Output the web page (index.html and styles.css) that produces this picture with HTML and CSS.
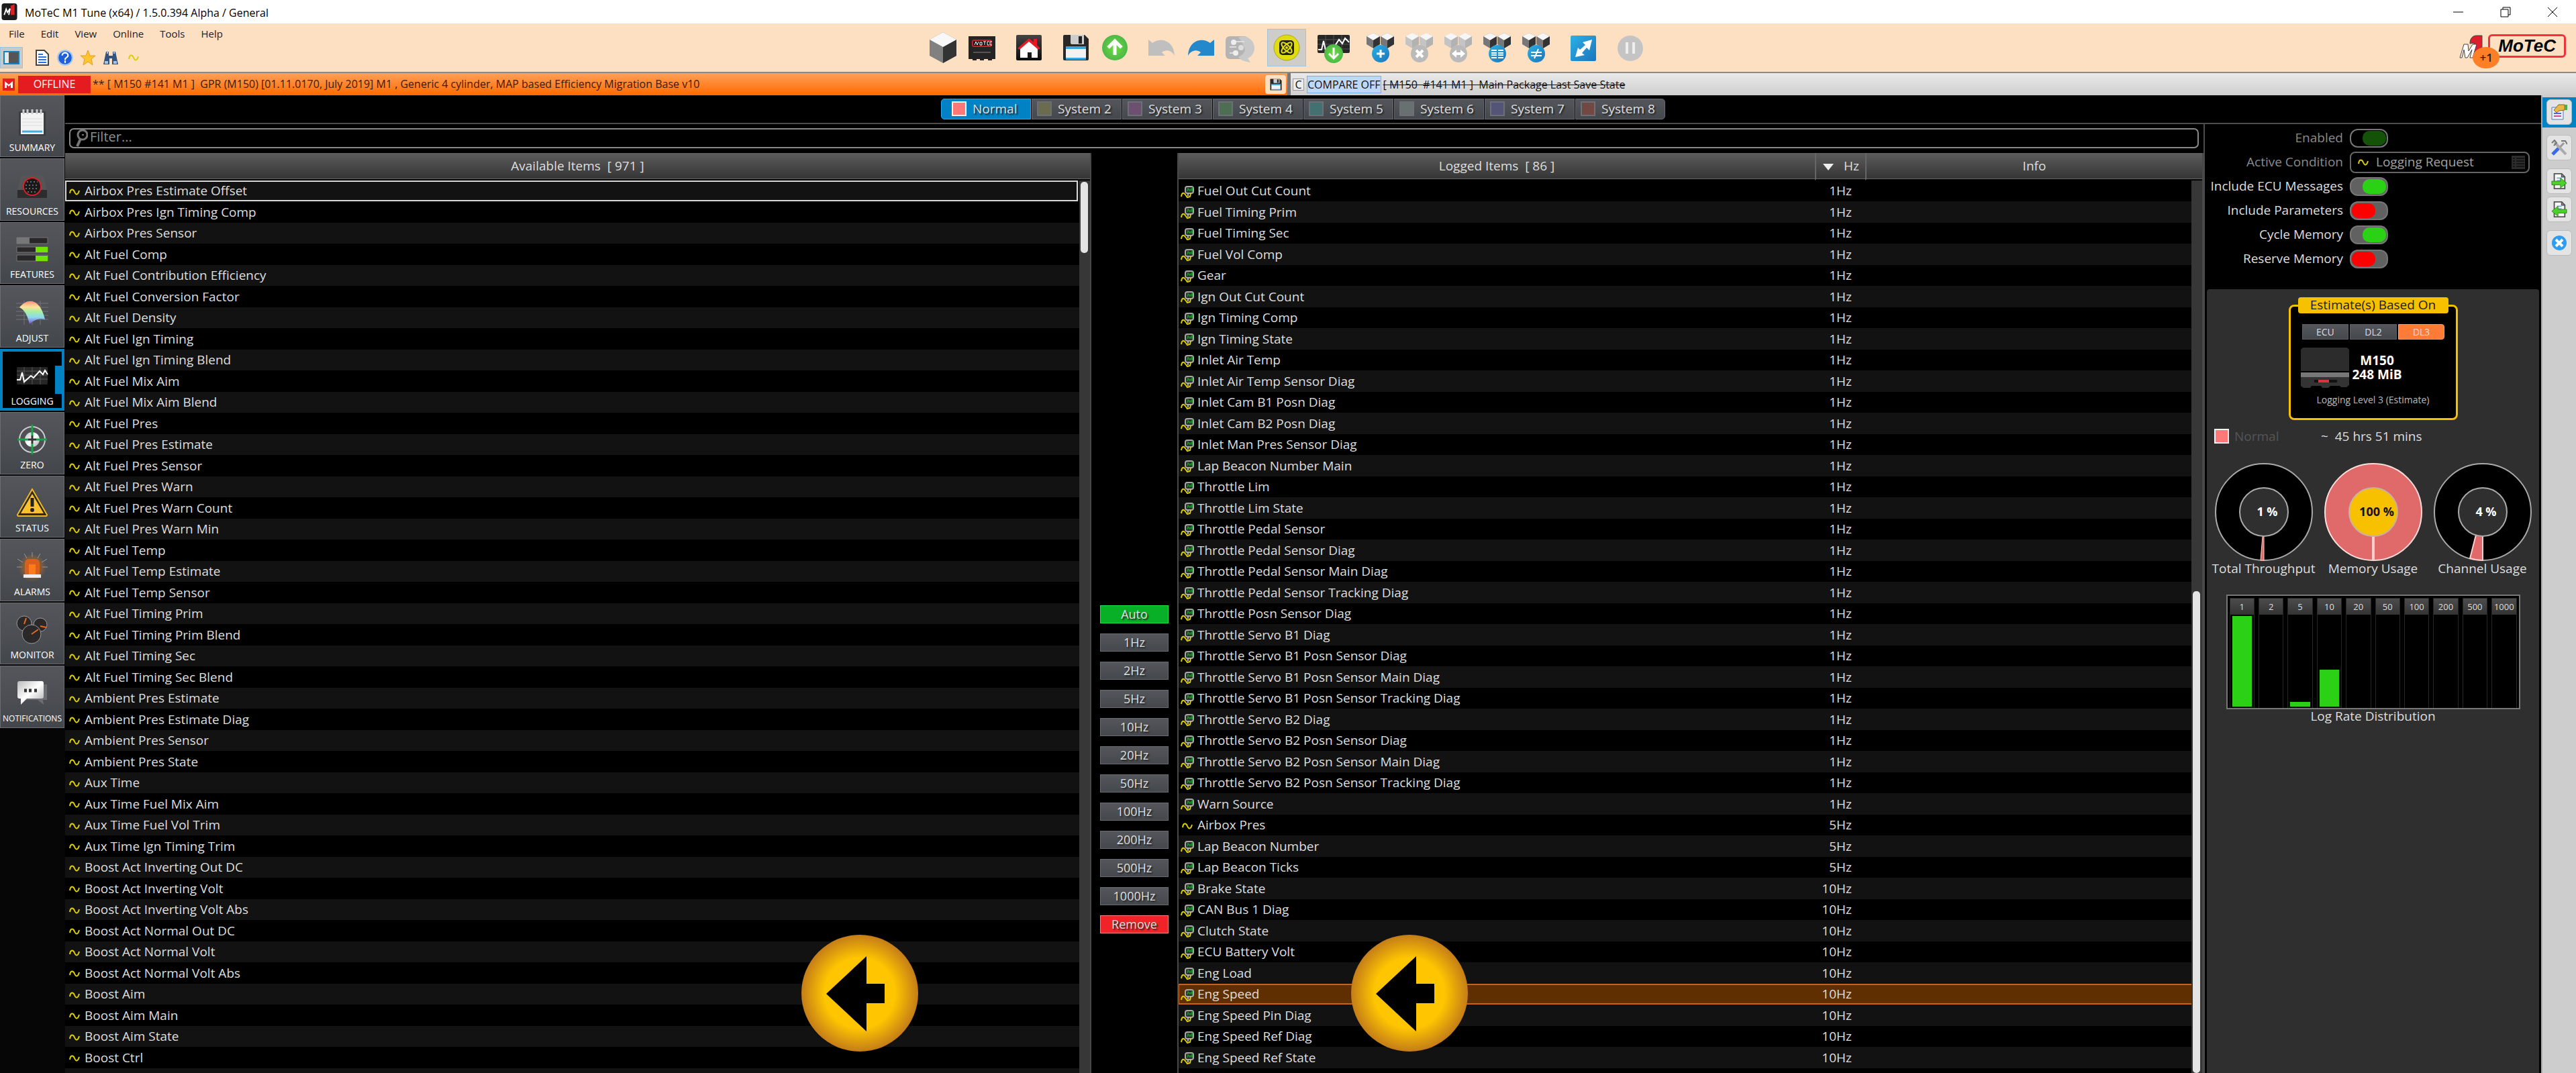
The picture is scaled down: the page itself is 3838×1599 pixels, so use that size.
FILE: index.html
```html
<!DOCTYPE html>
<html lang="en">
<head>
<meta charset="utf-8">
<title>MoTeC M1 Tune</title>
<link rel="stylesheet" href="styles.css">
</head>
<body>
<svg class="defs" aria-hidden="true">
  <defs>
    <linearGradient id="g-blue" x1="0" y1="0" x2="1" y2="1"><stop offset="0" stop-color="#2bb0e6"/><stop offset="1" stop-color="#1b75bb"/></linearGradient>
    <linearGradient id="g-dark" x1="0" y1="0" x2="0" y2="1"><stop offset="0" stop-color="#444"/><stop offset="1" stop-color="#0c0c0c"/></linearGradient>
    <linearGradient id="g-white" x1="0" y1="0" x2="1" y2="1"><stop offset="0" stop-color="#bbb"/><stop offset=".5" stop-color="#fff"/><stop offset="1" stop-color="#aaa"/></linearGradient>
    <linearGradient id="g-map" x1="0" y1="0" x2="0" y2="1"><stop offset="0" stop-color="#ff8f7c"/><stop offset=".25" stop-color="#ffe29a"/><stop offset=".45" stop-color="#a8f0a0"/><stop offset=".7" stop-color="#8fd8f0"/><stop offset="1" stop-color="#7a4fd0"/></linearGradient>
    <radialGradient id="g-green"><stop offset="0" stop-color="#6fdc3f"/><stop offset="1" stop-color="#4db848"/></radialGradient>
    <radialGradient id="g-glow"><stop offset="0" stop-color="#ff7a00" stop-opacity=".8"/><stop offset="1" stop-color="#ff7a00" stop-opacity="0"/></radialGradient>
    <radialGradient id="g-gold" r=".5"><stop offset=".6" stop-color="#ffc600"/><stop offset="1" stop-color="#c47d18"/></radialGradient>
  </defs>
  <symbol id="wave" viewBox="0 0 16 12"><path d="M1 8C2 1 6 1 8 6S13 11 15 4" fill="none" stroke="#dccf00" stroke-width="2"/></symbol>
  <symbol id="logwave" viewBox="0 0 20 20"><rect x="7" y="2" width="12" height="10" rx="3" fill="#2a2a2a" stroke="#a8a8a8" stroke-width="2"/><path d="M10 9l1-4 3 3 3-3v4" fill="none" stroke="#128c20" stroke-width="2"/><path d="M1 17c1-7 4-6 6-3l3 4 4-1 1-5" fill="none" stroke="#dccf00" stroke-width="2"/><path d="M11 12v4" stroke="#b5b5b5" stroke-width="2"/></symbol>
  <symbol id="cubes" viewBox="0 0 44 46"><path d="M1 6l10-5 10 5v12l-10 6-10-6z" fill="#777"/><path d="M11 11l10-5v12l-10 6z" fill="#333"/><path d="M1 6l10-5 10 5-10 6z" fill="#f6f6f6"/><path d="M22 6l10-5 10 5v12l-10 6-10-6z" fill="#777"/><path d="M32 11l10-5v12l-10 6z" fill="#333"/><path d="M22 6l10-5 10 5-10 6z" fill="#f6f6f6"/></symbol>
  <symbol id="cubes-off" viewBox="0 0 44 46"><path d="M1 6l10-5 10 5v12l-10 6-10-6z" fill="#c4c4c4"/><path d="M11 11l10-5v12l-10 6z" fill="#b2b2b2"/><path d="M1 6l10-5 10 5-10 6z" fill="#f6f6f6"/><path d="M22 6l10-5 10 5v12l-10 6-10-6z" fill="#c4c4c4"/><path d="M32 11l10-5v12l-10 6z" fill="#b2b2b2"/><path d="M22 6l10-5 10 5-10 6z" fill="#f6f6f6"/></symbol>
  <symbol id="floppy" viewBox="0 0 40 40"><path d="M3 1h30l6 6v30a2 2 0 0 1-2 2H3a2 2 0 0 1-2-2V3a2 2 0 0 1 2-2z" fill="#2a2729"/><path d="M12 1h20v14H14a2 2 0 0 1-2-2z" fill="#ccc"/><path d="M24 3h5v11h-5z" fill="#222"/><path d="M5 18h30v20H5z" fill="#f2f2f2"/><path d="M5 18h30v4H5zM5 35h30v3H5z" fill="#3aa5dd"/></symbol>
  <symbol id="page" viewBox="0 0 24 26"><path d="M4 1h12l5 5v19H4z" fill="#fafafa" stroke="#555" stroke-width="2"/><path d="M16 1v5h5" fill="none" stroke="#555" stroke-width="2"/><path d="M8 8h8M8 12h8" stroke="#7fa6d8" stroke-width="2"/></symbol>
</svg>

<div class="app">
  <header class="titlebar">
    <svg class="app-icon" viewBox="0 0 24 26"><rect width="24" height="26" rx="4" fill="#1c1c1c"/><path d="M14 18V4l6-3v17z" fill="#d8202a"/><path d="M4 18l3-9 2 5 4-6-2 10" fill="none" stroke="#fff" stroke-width="2"/></svg>
    <h1>MoTeC M1 Tune (x64) / 1.5.0.394 Alpha / General</h1>
    <div class="win-controls">
      <button aria-label="Minimise"><svg viewBox="0 0 16 16"><path d="M0 8h15" stroke="#000"/></svg></button>
      <button aria-label="Restore"><svg viewBox="0 0 16 16"><path d="M1 4h11v11H1zM4 4V1h11v11h-3" fill="none" stroke="#000"/></svg></button>
      <button aria-label="Close"><svg viewBox="0 0 16 16"><path d="M1 1l14 14M15 1L1 15" stroke="#000"/></svg></button>
    </div>
  </header>

  <div class="band">
    <div class="band-left">
      <nav class="menu"><button>File</button><button>Edit</button><button>View</button><button>Online</button><button>Tools</button><button>Help</button></nav>
      <div class="quick">
        <button class="quick-on" aria-label="Side panel"><svg viewBox="0 0 24 20"><path d="M1 1h22v18H1z" fill="#555" stroke="#0a84c6" stroke-width="2"/><path d="M2 2h6v16H2z" fill="#e8e8e8"/></svg></button>
        <button aria-label="Document"><svg viewBox="0 0 20 24"><path d="M1 1h12l6 6v16H1z" fill="#fff" stroke="#444" stroke-width="2"/><path d="M4 7h7M4 11h12M4 15h12M4 19h12" stroke="#2f6fe0" stroke-width="2"/></svg></button>
        <button aria-label="Help"><svg viewBox="0 0 22 22"><circle cx="11" cy="11" r="10" fill="#1f5fd8" stroke="#a8c8f0" stroke-width="2"/><path d="M7 8c0-5 8-5 8 0 0 3-4 2-4 6m0 1v3" fill="none" stroke="#fff" stroke-width="2"/></svg></button>
        <button aria-label="Favourites"><svg viewBox="0 0 24 24"><path d="M12 1l3 8h8l-6 5 2 9-7-5-7 5 2-9-6-5h8z" fill="#ffc42e" stroke="#e0a020"/></svg></button>
        <button aria-label="Find"><svg viewBox="0 0 24 24"><path d="M5 3h4v6h6V3h4l4 19h-9v-9h-4v9H1z" fill="#34537e"/><path d="M3 17h5v4H3zM16 17h5v4h-5zM6 2h2v4H6zM16 2h2v4h-2z" fill="#a9c4e6"/></svg></button>
        <button aria-label="Channels"><svg class="quick-wave"><use href="#wave"/></svg></button>
      </div>
    </div>

    <div class="toolbar">
      <div class="tools">
        <button aria-label="Package"><svg viewBox="0 0 44 46"><path d="M2 11L22 0l20 11v24L22 46 2 35z" fill="#808080"/><path d="M22 22l20-11v24L22 46z" fill="#333"/><path d="M2 11L22 0l20 11-20 11z" fill="#f8f8f8"/></svg></button>
        <button aria-label="Device"><svg viewBox="0 0 44 46"><path d="M2 6h40v34h-5v2h-6v-2h-6v2h-6v-2h-5v2H8v-2H2z" fill="#242424"/><rect x="8" y="12" width="28" height="9" rx="2" fill="#111" stroke="#c8202a" stroke-width="2"/><path d="M11 19l2-5 2 5 2-5m2 1h3v4h-3zm5-1h4m-2 0v5m7-5h-3v5h3m4-5h-3v5h3" fill="none" stroke="#fff"/><path d="M9 30h26" stroke="#555" stroke-width="2"/></svg></button>
      </div>
      <div class="tools"><button aria-label="Home"><svg viewBox="0 0 44 46"><rect x="3" y="4" width="38" height="38" rx="2" fill="url(#g-dark)"/><path d="M9 24l13-12 13 12v14h-9v-8h-6v8H9z" fill="#fff"/><path d="M5 24L22 9l7 6v-5h5v9l5 5-3 2-14-12L8 26z" fill="#e31b23"/></svg></button></div>
      <div class="tools">
        <button aria-label="Save"><svg viewBox="-2 -3 44 46"><use href="#floppy" width="40" height="40"/></svg></button>
        <button aria-label="Upload"><svg viewBox="0 0 44 46"><circle cx="22" cy="23" r="19" fill="url(#g-green)"/><path d="M22 34V13M12 23l10-10 10 10" fill="none" stroke="#fff" stroke-width="5"/></svg></button>
      </div>
      <div class="tools">
        <button aria-label="Undo"><svg viewBox="0 0 44 46"><path d="M2 11l6 5c12-9 32-4 33 19-4-8-13-10-19-5l5 5H2z" fill="#bfbfbf"/></svg></button>
        <button aria-label="Redo"><svg viewBox="0 0 44 46"><path d="M42 11l-6 5C24 7 4 12 3 35c4-8 13-10 19-5l-5 5h25z" fill="#2488cc"/></svg></button>
        <button aria-label="Comments"><svg viewBox="0 0 44 46"><rect x="1" y="6" width="34" height="34" rx="6" fill="#b4b4b4"/><path d="M20 8a17 17 0 1 1 14 31l4 6c-8-1-14-3-18-8 8-4 12-9 8-16-3-6-3-9-8-13z" fill="#c9c9c9"/><circle cx="13" cy="15" r="4" fill="#eee"/><path d="M17 14h12M7 22h10M7 31h6" stroke="#ddd" stroke-width="2"/><circle cx="24" cy="23" r="4" fill="#ddd"/><circle cx="16" cy="31" r="4" fill="#eee"/></svg></button>
      </div>
      <div class="tools"><button class="tool-on" aria-label="Calibrate"><svg viewBox="0 0 44 46"><circle cx="22" cy="23" r="19" fill="#e0dc10" stroke="#a8a820"/><rect x="11" y="12" width="22" height="22" rx="5" fill="#222"/><ellipse cx="22" cy="23" rx="4" ry="10" fill="none" stroke="#e0dc10" stroke-width="2" transform="rotate(45 22 23)"/><ellipse cx="22" cy="23" rx="4" ry="10" fill="none" stroke="#e0dc10" stroke-width="2" transform="rotate(-45 22 23)"/><circle cx="22" cy="23" r="2" fill="#e0dc10"/></svg></button></div>
      <div class="tools"><button aria-label="Download log"><svg class="wide" viewBox="0 0 48 46"><rect y="4" width="48" height="27" rx="2" fill="#262626"/><path d="M0 11h48M0 18h48M0 25h48M12 4v27M24 4v27M36 4v27" stroke="#555"/><path d="M1 26h5l3-13 3 14 6-6 6 2 8-12 5 6 4-8 6 6" fill="none" stroke="#fff" stroke-width="2"/><circle cx="24" cy="32" r="14" fill="url(#g-green)"/><path d="M24 23v15M17 32l7 7 7-7" fill="none" stroke="#fff" stroke-width="3"/></svg></button></div>
      <div class="tools">
        <button aria-label="Add"><svg viewBox="0 0 44 46"><use href="#cubes"/><circle cx="22" cy="32" r="13" fill="url(#g-blue)"/><path d="M16 32h12M22 26v12" stroke="#fff" stroke-width="3"/></svg></button>
        <button aria-label="Delete"><svg viewBox="0 0 44 46"><use href="#cubes-off"/><circle cx="22" cy="32" r="13" fill="#bababa"/><path d="M17 27l10 10M27 27L17 37" stroke="#fff" stroke-width="4"/></svg></button>
        <button aria-label="Swap"><svg viewBox="0 0 44 46"><use href="#cubes-off"/><circle cx="22" cy="32" r="13" fill="#bababa"/><path d="M12 32l7-6v4h6v-4l7 6-7 6v-4h-6v4z" fill="#fff"/></svg></button>
        <button aria-label="Compare list"><svg viewBox="0 0 44 46"><use href="#cubes"/><circle cx="22" cy="32" r="13" fill="url(#g-blue)"/><path d="M13 27h8M13 31h8M13 34h8M13 38h8M23 27h8M23 31h8M23 34h8M23 38h8" stroke="#fff" stroke-width="2"/></svg></button>
        <button aria-label="Differences"><svg viewBox="0 0 44 46"><use href="#cubes"/><circle cx="22" cy="32" r="13" fill="url(#g-blue)"/><path d="M14 30h16M14 35h16M25 25l-6 14" stroke="#fff" stroke-width="2"/></svg></button>
      </div>
      <div class="tools"><button aria-label="Full screen"><svg viewBox="0 0 44 46"><rect x="3" y="5" width="38" height="38" rx="2" fill="url(#g-blue)"/><path d="M35 11l-4 16-4-4-7 8 4 3-14 3 4-14 3 3 8-7-4-4z" fill="#fff"/></svg></button></div>
      <div class="tools"><button aria-label="Pause"><svg viewBox="0 0 44 46"><circle cx="22" cy="24" r="19" fill="#c4c4c4"/><path d="M17 15v17M27 15v17" stroke="#eee" stroke-width="4"/></svg></button></div>
    </div>

    <div class="brand">
      <svg class="brand-m1" viewBox="0 0 36 38"><path d="M16 14c0-8 4-12 10-12h8v24H22V13z" fill="#dc1f2a" stroke="#444"/><path d="M1 35l6-20h6l1 10 6-10h6l-6 20h-4l3-12-7 12h-3l-2-12-3 12z" fill="#fff" stroke="#444"/></svg>
      <span class="brand-box">MoTeC</span>
      <span class="badge">+1</span>
    </div>
  </div>

  <div class="packages">
    <div class="pkg pkg-main">
      <svg class="pkg-m" viewBox="0 0 18 18"><rect width="18" height="18" fill="#e41c20"/><path d="M3 14V4l6 5 6-5v10h-3V9l-3 3-3-3v5z" fill="#fff"/></svg>
      <span class="offline">OFFLINE</span>
      <span class="pkg-name">** [ M150 #141 M1 ]  GPR (M150) [01.11.0170, July 2019] M1 , Generic 4 cylinder, MAP based Efficiency Migration Base v10</span>
      <button class="pkg-save" aria-label="Save package"><svg><use href="#floppy"/></svg></button>
    </div>
    <div class="pkg pkg-compare">
      <span class="c-box">C</span>
      <span class="compare-off">COMPARE OFF</span>
      <s>[ M150  #141 M1 ]  Main Package Last Save State</s>
    </div>
  </div>

  <div class="body">
    <nav class="side-nav">
      <button><svg viewBox="0 0 48 48"><path d="M4 6h40v36H4z" fill="#303236" opacity=".6"/><path d="M7 8h34v32H7z" fill="#f3f3f3"/><path d="M9 36h30" stroke="#42b0e0" stroke-width="3"/><path d="M9 17h30M9 22h30M9 27h30" stroke="#ddd"/><path d="M11 3v7M17 3v7M24 3v7M31 3v7M37 3v7" stroke="#ccc" stroke-width="3"/></svg>SUMMARY</button>
      <button><svg viewBox="0 0 48 48"><path d="M7 6h34l5 22v12H2V28z" fill="#555"/><path d="M2 28h44v12H2z" fill="#2c2c2c"/><circle cx="24" cy="23" r="13" fill="#191919" stroke="#d81f2c" stroke-width="2"/><path d="M16 16h16M14 21h20M14 26h20M17 31h14" stroke="#666" stroke-width="2" stroke-dasharray="2 3"/></svg>RESOURCES</button>
      <button><svg viewBox="0 0 48 48"><path d="M1 5h46v9H1zM1 19h46v8H1zM1 31h46v9H1z" fill="#2a2728" stroke="#777"/><path d="M1 5h19v9H1z" fill="#777"/><path d="M29 19h18v8H29zM29 32h18v8H29z" fill="#70e400"/></svg>FEATURES</button>
      <button><svg viewBox="0 0 48 48"><path d="M0 8h48M0 14h48M0 20h48M0 26h48M0 32h48M12 4v36M24 4v36M36 4v36" stroke="#70747a"/><path d="M5 14c9-10 16-11 24-7 8 5 12 16 14 25-9-2-15 0-23 7C17 27 14 19 5 14z" fill="url(#g-map)"/></svg>ADJUST</button>
      <button class="nav-on"><svg viewBox="0 0 48 48"><rect x="1" y="9" width="46" height="26" rx="2" fill="#262626"/><path d="M1 15h46M1 21h46M1 27h46M12 9v26M24 9v26M36 9v26" stroke="#555"/><path d="M1 28h5l3-11 3 14 10-9 4 3 9-10 5 5 3-6 4 6" fill="none" stroke="#fff" stroke-width="2"/></svg>LOGGING</button>
      <button><svg viewBox="0 0 48 48"><circle cx="24" cy="22" r="19" fill="none" stroke="#ccc" stroke-width="2"/><circle cx="24" cy="22" r="11" fill="url(#g-white)"/><path d="M24 0v16M24 28v16M2 22h16M30 22h16" stroke="#15a545" stroke-width="3"/><path d="M24 16v12M18 22h12" stroke="#333" stroke-width="3"/></svg>ZERO</button>
      <button><svg viewBox="0 0 48 48"><path d="M24 2l22 38a2 2 0 0 1-1 2H3a2 2 0 0 1-1-2z" fill="#2c2a24" stroke="#f0b61e" stroke-width="2"/><path d="M24 9l17 29H7z" fill="#fcc12c"/><path d="M24 15v13" stroke="#222" stroke-width="5"/><circle cx="24" cy="33" r="3" fill="#222"/></svg>STATUS</button>
      <button><svg viewBox="0 0 48 48"><circle cx="24" cy="24" r="21" fill="url(#g-glow)"/><path d="M24 1v7M12 3l4 7M36 3l-4 7M2 11l8 5M46 11l-8 5M1 23h8M47 23h-8" stroke="#999"/><path d="M13 34V17a6 6 0 0 1 6-6h10a6 6 0 0 1 6 6v17z" fill="#d9601c"/><path d="M19 19h10v15H19z" fill="#ff7a1a"/><path d="M11 34h26v5H11z" fill="#eee"/></svg>ALARMS</button>
      <button><svg viewBox="0 0 48 48"><g fill="#2a2829" stroke="#999"><circle cx="12" cy="13" r="11"/><circle cx="36" cy="15" r="10"/><circle cx="23" cy="29" r="14"/></g><path d="M12 14l3-9M36 17l9 2M23 29l10-7" stroke="#e8691c" stroke-width="2"/></svg>MONITOR</button>
      <button class="nav-long"><svg viewBox="0 0 48 48"><path d="M8 9h38v23h-6l1 7-9-7H8z" fill="#6a6d72"/><path d="M5 4h33a3 3 0 0 1 3 3v20a3 3 0 0 1-3 3H16l-9 9V30H5a3 3 0 0 1-3-3V7a3 3 0 0 1 3-3z" fill="url(#g-white)"/><path d="M12 18h4M19 18h4M27 18h4" stroke="#333" stroke-width="5"/></svg>NOTIFICATIONS</button>
    </nav>

    <main class="main">
      <div class="tabs">
        <button class="tab tab-on"><i class="sw sw-1"></i>Normal</button><button class="tab"><i class="sw sw-2"></i>System 2</button><button class="tab"><i class="sw sw-3"></i>System 3</button><button class="tab"><i class="sw sw-4"></i>System 4</button><button class="tab"><i class="sw sw-5"></i>System 5</button><button class="tab"><i class="sw sw-6"></i>System 6</button><button class="tab"><i class="sw sw-7"></i>System 7</button><button class="tab"><i class="sw sw-8"></i>System 8</button>
      </div>
      <div class="content">
        <section class="work">
          <label class="filter">
            <svg viewBox="0 0 18 26"><circle cx="10" cy="8" r="7" fill="none" stroke="#777" stroke-width="3"/><path d="M7 14L2 25" stroke="#777" stroke-width="4"/><path d="M9 8h3" stroke="#777" stroke-width="2"/></svg>
            <input type="text" placeholder="Filter..." aria-label="Filter">
          </label>
          <div class="lists">
            <div class="pane">
              <table class="items available">
                <colgroup><col><col class="col-gutter"></colgroup>
                <thead><tr><th colspan="2">Available Items  [ 971 ]</th></tr></thead>
                <tbody id="available"></tbody>
              </table>
              <div class="scroll"><div class="thumb thumb-top"></div></div>
              <svg class="pointer pointer-a" viewBox="0 0 174 174"><circle cx="87" cy="87" r="87" fill="url(#g-gold)"/><path d="M37 88l60-56v41h27v29H97v42z"/></svg>
            </div>
            <div class="rates">
              <button class="rate-auto">Auto</button><button>1Hz</button><button>2Hz</button><button>5Hz</button><button>10Hz</button><button>20Hz</button><button>50Hz</button><button>100Hz</button><button>200Hz</button><button>500Hz</button><button>1000Hz</button><button class="rate-remove">Remove</button>
            </div>
            <div class="pane">
              <table class="items logged">
                <colgroup><col><col class="col-hz"><col class="col-info"><col class="col-gutter"></colgroup>
                <thead><tr><th>Logged Items  [ 86 ]</th><th class="th-hz"><svg viewBox="0 0 18 10"><path d="M1 0h16L9 10z" fill="#eee"/></svg>Hz</th><th colspan="2">Info</th></tr></thead>
                <tbody id="logged"></tbody>
              </table>
              <div class="scroll"><div class="thumb thumb-low"></div></div>
              <svg class="pointer pointer-b" viewBox="0 0 174 174"><circle cx="87" cy="87" r="87" fill="url(#g-gold)"/><path d="M37 88l60-56v41h27v29H97v42z"/></svg>
            </div>
          </div>
        </section>

        <aside class="props">
          <form class="options">
            <label class="dim" for="enabled">Enabled</label><input class="toggle" type="checkbox" id="enabled" checked disabled>
            <label class="dim" for="condition">Active Condition</label>
            <div class="condition"><svg class="cond-wave"><use href="#wave"/></svg><select id="condition"><option>Logging Request</option></select><svg class="cond-list" viewBox="0 0 20 20"><path d="M0 0h20v20H0z" fill="#2c2c2c"/><path d="M2 4h3M2 8h3M2 12h3M2 16h3M7 4h12M7 8h12M7 12h12M7 16h12" stroke="#000"/></svg></div>
            <label for="ecu">Include ECU Messages</label><input class="toggle" type="checkbox" id="ecu" checked>
            <label for="params">Include Parameters</label><input class="toggle" type="checkbox" id="params">
            <label for="cycle">Cycle Memory</label><input class="toggle" type="checkbox" id="cycle" checked>
            <label for="reserve">Reserve Memory</label><input class="toggle" type="checkbox" id="reserve">
          </form>
          <div class="stats">
            <fieldset class="estimate">
              <legend>Estimate(s) Based On</legend>
              <div class="levels"><button>ECU</button><button>DL2</button><button class="level-on">DL3</button></div>
              <div class="device">
                <svg viewBox="0 0 72 60"><path d="M3 0h66l3 3v32H0V3z" fill="#2c2c2c"/><path d="M0 37h72v7H0z" fill="#777"/><path d="M0 44h72v12l-4 3h-8l-2-2H44l-3 3H32l-2-3H16l-2 3H4l-4-3z" fill="#333"/><path d="M20 48h34v4H20z" fill="#111"/><path d="M26 48h16v4H26z" fill="#d8343c"/></svg>
                <strong>M150<br>248 MiB</strong>
              </div>
              <p>Logging Level 3 (Estimate)</p>
            </fieldset>
            <div class="duration"><i class="sw sw-1"></i><span class="faint">Normal</span><span class="time">~  45 hrs 51 mins</span></div>
            <div class="gauges">
              <figure><svg viewBox="0 0 148 148"><circle cx="74" cy="74" r="72" fill="#000" stroke="#aaa" stroke-width="2"/><path d="M74 110v36h-5l3-36z" fill="#e06a6a" stroke="#fcc"/><circle cx="74" cy="74" r="36" fill="#2f2f2f" stroke="#aaa" stroke-width="2"/><text x="79" y="80">1 %</text></svg><figcaption>Total Throughput</figcaption></figure>
              <figure><svg viewBox="0 0 148 148"><circle cx="74" cy="74" r="72" fill="#e06a6a" stroke="#fdd" stroke-width="2"/><path d="M74 110v36" stroke="#fcc" stroke-width="4"/><circle cx="74" cy="74" r="36" fill="#f8c100" stroke="#c9b0a0" stroke-width="2"/><text x="79" y="80" class="full">100 %</text></svg><figcaption>Memory Usage</figcaption></figure>
              <figure><svg viewBox="0 0 148 148"><circle cx="74" cy="74" r="72" fill="#000" stroke="#aaa" stroke-width="2"/><path d="M74 108v38q-10 0-19-3l9-35z" fill="#e06a6a" stroke="#fcc" stroke-width="2"/><circle cx="74" cy="74" r="36" fill="#2f2f2f" stroke="#aaa" stroke-width="2"/><text x="79" y="80">4 %</text></svg><figcaption>Channel Usage</figcaption></figure>
            </div>
            <figure class="dist">
              <div class="bars" id="bars"></div>
              <figcaption>Log Rate Distribution</figcaption>
            </figure>
          </div>
        </aside>
      </div>
    </main>

    <div class="strip">
      <div class="strip-on"><button aria-label="Properties"><svg viewBox="0 0 24 24"><path d="M1 5h17v18H1z" fill="#e8f0fc" stroke="#5878b8"/><path d="M4 14h11" stroke="#4a6ad0" stroke-width="2"/><path d="M4 18h11" stroke="#e04090" stroke-width="2"/><path d="M4 9l7-8h9v8l-8 1-4 3z" fill="#e8b84a" stroke="#8a6414"/><path d="M20 1h4v8h-4z" fill="#4ab04a"/></svg></button></div>
      <button class="gap-s" aria-label="Tools"><svg viewBox="0 0 24 24"><path d="M3 22L19 5" stroke="#999" stroke-width="3"/><path d="M2 22l9-9" stroke="#3a6ae8" stroke-width="5"/><path d="M5 4l17 18" stroke="#aaa" stroke-width="4"/><path d="M1 5l4-4 3 4-4 4M15 2h6l3 5" fill="none" stroke="#777" stroke-width="2"/></svg></button>
      <button class="gap-m" aria-label="Export"><svg viewBox="0 0 24 26"><use href="#page"/><path d="M0 13h14V8l10 8-10 8v-5H0z" fill="#4ed02c" stroke="#2a8a1a"/></svg></button>
      <button class="gap-l" aria-label="Import"><svg viewBox="0 0 24 26"><use href="#page"/><path d="M24 13H10V8L0 16l10 8v-5h14z" fill="#4ed02c" stroke="#2a8a1a"/></svg></button>
      <button aria-label="Close panel"><svg viewBox="0 0 24 24"><circle cx="12" cy="12" r="11" fill="#2e9cf0"/><path d="M7 7l10 10M17 7L7 17" stroke="#fff" stroke-width="4"/></svg></button>
    </div>
  </div>
</div>
<script src="app.js"></script>
</body>
</html>
```
FILE: styles.css
```css
* { box-sizing: border-box; }
body { margin: 0; background: #000; color: #dedede; font: 19px/24px "Open Sans", "Noto Sans", sans-serif; }
button, input, select { font: inherit; color: inherit; margin: 0; padding: 0; border: 0; background: none; }
h1, p, figure { margin: 0; font-weight: normal; }
svg { display: block; flex: none; }
.defs { position: absolute; width: 0; height: 0; }
.app { height: 100vh; display: flex; flex-direction: column; overflow: hidden; }

.titlebar { flex: none; height: 35px; background: #fff; color: #000; display: flex; align-items: center; gap: 11px; padding-left: 2px; }
.titlebar h1 { font-size: 16px; flex: 1; padding-top: 2px; }
.app-icon { width: 24px; height: 25px; }
.win-controls { display: flex; }
.win-controls button { width: 70px; height: 32px; display: grid; place-items: center; }
.win-controls svg { width: 16px; height: 16px; }

.band { flex: none; height: 72px; background: #fde0c2; color: #222; display: grid; grid-template-columns: 1fr auto 1fr; }
.band-left { display: flex; flex-direction: column; justify-content: space-between; }
.menu { display: flex; gap: 24px; padding-left: 13px; font-size: 15px; line-height: 30px; }
.quick { display: flex; align-items: center; height: 32px; margin-bottom: 5px; }
.quick button { width: 34px; height: 32px; display: grid; place-items: center; }
.quick svg { width: 24px; height: 24px; }
.quick .quick-wave { width: 16px; height: 14px; }
.quick .quick-on { border: 1px solid #99c4de; background: #c9c9c7; margin-right: 12px; }
.toolbar { display: flex; gap: 12px; align-items: center; padding-right: 4px; }
.tools { display: flex; }
.tools button { width: 58px; height: 56px; display: grid; place-items: center; }
.tools svg { width: 44px; height: 46px; }
.tools .wide { width: 48px; }
.tools .tool-on { background: #cecdc9; border: 1px solid #9ec5dc; }
.brand { position: relative; justify-self: end; display: flex; margin: 16px 15px 0 0; gap: 7px; height: 36px; }
.brand-m1 { width: 36px; height: 38px; }
.brand-box { border: 3px solid #f0323c; border-radius: 6px; height: 35px; padding: 0 12px; color: #000; font: italic bold 26px/29px "Liberation Sans", sans-serif; }
.badge { position: absolute; left: 20px; top: 19px; width: 40px; height: 32px; border-radius: 50%; background: #ff7f27; color: #222; text-align: center; font-size: 17px; line-height: 32px; font-weight: 600; }

.packages { flex: none; height: 35px; border-top: 2px solid #8c8a86; display: grid; grid-template-columns: 1fr 1fr; color: #111; font-size: 16px; background: #777; }
.pkg { display: flex; align-items: center; white-space: pre; }
.pkg-main { background: linear-gradient(#ffa058, #ff6a00); padding-left: 4px; margin-right: 1px; color: #3c1a08; }
.pkg-m { width: 18px; height: 18px; margin-right: 5px; }
.offline { width: 108px; height: 26px; line-height: 24px; background: #e41c20; color: #fff; text-align: center; margin-right: 3px; }
.pkg-name { flex: 1; line-height: 28px; padding-bottom: 2px; }
.pkg-save { width: 31px; height: 28px; background: #fde0c2; border-radius: 4px; display: grid; place-items: center; margin-right: 2px; }
.pkg-save svg { width: 18px; height: 18px; }
.pkg-compare { background: linear-gradient(#e9e9e9, #cfcfcf); margin-left: 4px; padding-left: 3px; }
.c-box { width: 17px; height: 18px; line-height: 16px; border: 1px solid #999; background: #eee; text-align: center; margin-right: 4px; }
.compare-off { background: #bfd8f8; border: 1px solid #7aaef0; height: 26px; line-height: 24px; margin-right: 3px; }

.body { flex: 1; min-height: 0; display: flex; }
.side-nav { flex: none; width: 97px; background: #060606; display: grid; align-content: start; grid-auto-rows: 92px 93px; row-gap: 2px; padding-right: 1px; }
.side-nav button { font-size: 14px; line-height: 20px; color: #fff; background: linear-gradient(#55565c, #43474b); border: 1px solid #6a6c72; display: flex; flex-direction: column; align-items: center; justify-content: flex-end; gap: 2px; padding-bottom: 3px; }
.side-nav svg { width: 48px; height: 48px; }
.side-nav .nav-long { font-size: 12px; }
.side-nav .nav-on { background: linear-gradient(#0082c4, #0082c4) right center / 10px 42px no-repeat, #000; border: 4px solid #0082c4; padding-bottom: 0; }

.main { flex: 1; min-width: 0; display: flex; flex-direction: column; }
.tabs { flex: none; height: 43px; padding-top: 5px; border-bottom: 2px solid #4c4c4c; display: flex; justify-content: center; align-items: flex-start; gap: 1px; }
.tab { width: 134px; height: 31px; background: linear-gradient(#54565c, #44484c); border: 1px solid #666970; display: flex; align-items: center; padding-left: 7px; gap: 9px; line-height: 22px; padding-bottom: 2px; text-shadow: 2px 2px 2px #222; }
.tab-on { background: #0082c4; border-color: #28a8f0; border-radius: 5px 0 0 5px; padding-left: 15px; }
.tab:last-child { border-radius: 0 5px 5px 0; }
.sw { width: 22px; height: 22px; flex: none; border: 2px solid #6c7076; }
.sw-1 { background: #ff7878; border-color: #f4f4f4; }
.sw-2 { background: #6b6b50; }
.sw-3 { background: #6c5070; }
.sw-4 { background: #4e6e54; }
.sw-5 { background: #437070; }
.sw-6 { background: #697070; }
.sw-7 { background: #535478; }
.sw-8 { background: #714842; }

.content { flex: 1; min-height: 0; display: flex; }
.work { flex: 1; min-width: 0; display: flex; flex-direction: column; padding-top: 6px; }
.filter { flex: none; height: 30px; margin: 0 7px 7px 6px; border: 2px solid #8a8a8a; border-radius: 7px; display: flex; align-items: center; gap: 3px; padding-left: 8px; }
.filter svg { width: 18px; height: 26px; }
.filter input { flex: 1; font-size: 20px; line-height: 24px; padding-bottom: 4px; outline: 0; }
.filter input::placeholder { color: #8e8e8e; opacity: 1; }
.lists { flex: 1; min-height: 0; display: grid; grid-template-columns: 1fr 128px 1fr; }
.pane { position: relative; overflow: hidden; border: 0 solid #484848; border-right-width: 2px; }
.rates + .pane { border-left-width: 2px; }
.items { width: 100%; table-layout: fixed; border-spacing: 0; }
.items th { height: 41px; padding: 0 0 2px; font-weight: normal; white-space: pre; background: linear-gradient(#5c5c5c, #343434) padding-box; border: solid #000; border-width: 0 0 2px; box-shadow: inset 0 -1px #666; }
.items th + th { border-left: 2px solid #666; }
.items .th-hz svg { display: inline-block; width: 18px; height: 10px; margin-right: 14px; }
.items td { height: 31px; padding: 0 0 1px; line-height: 24px; white-space: nowrap; }
.items tr:nth-child(even) td { height: 32px; }
.available tr:nth-child(odd) td, .logged tr:nth-child(even) td { background: #121212; }
.items .name svg { display: inline-block; vertical-align: middle; }
.i-wave { width: 16px; height: 12px; margin: 0 7px 0 6px; }
.i-log { width: 20px; height: 20px; margin: 0 5px 0 3px; }
.logged .i-wave { margin: 0 7px 0 5px; }
.hz { text-align: right; }
.items .hz { padding-right: 20px; }
.col-hz { width: 75px; }
.col-info { width: 484px; }
.col-gutter { width: 18px; }
.focused .name { border: 2px solid #d8d8d8; }
.focused .i-wave { margin-left: 4px; }
.items .picked td { background: #5f2f02; border: solid #c76218; border-width: 2px 0; }
.items .picked .name { border-left-width: 1px; }
.picked .i-log { margin-left: 2px; }
.scroll { position: absolute; right: 0; top: 41px; bottom: 0; width: 16px; background: #373737; padding: 2px; }
.thumb { position: absolute; width: 11px; border-radius: 5px; background: #e4e4e4; }
.thumb-top { top: 2px; height: 8%; }
.thumb-low { top: 46%; bottom: 0; }
.pointer { position: absolute; bottom: 32px; width: 174px; height: 174px; }
.pointer-a { right: 256px; }
.pointer-b { left: 257px; }
.rates { display: flex; flex-direction: column; align-items: center; gap: 15px; padding-top: 674px; font-size: 18px; }
.rates button { width: 102px; height: 27px; line-height: 22px; padding-bottom: 2px; background: linear-gradient(#54565c, #44484c); border: 1px solid #696c72; text-shadow: 2px 2px 2px #222; }
.rates .rate-auto { background: #08b028; border-color: #20e048; }
.rates .rate-remove { background: #f02428; border-color: #ff8080; }

.props { flex: none; width: 503px; border-left: 2px solid #4c4c4c; display: flex; flex-direction: column; }
.options { display: grid; grid-template-columns: 206px 1fr; grid-auto-rows: 36px; column-gap: 10px; align-items: center; padding: 3px 0 27px; }
.options label { text-align: right; white-space: nowrap; padding-bottom: 3px; }
.options .dim { color: #8a8a8a; }
.toggle { appearance: none; width: 57px; height: 28px; border: 2px solid #777; border-radius: 12px; background: #616161; display: flex; }
.toggle::before { content: ""; width: 35px; height: 22px; margin: 1px; border-radius: 10px; background: #f00; }
.toggle:checked { justify-content: flex-end; }
.toggle:checked::before { background: #2bd114; }
.toggle:disabled { background: #000; }
.toggle:disabled::before { background: #145208; }
.condition { width: 268px; height: 32px; border: 2px solid #666; border-radius: 8px; display: flex; align-items: center; gap: 11px; padding: 0 5px 0 10px; color: #a0a0a0; }
.condition select { appearance: none; flex: 1; padding-bottom: 3px; }
.cond-wave { width: 16px; height: 12px; }
.cond-list { width: 20px; height: 20px; }

.stats { flex: 1; background: #2f2f2f; margin: 0 3px; border-radius: 4px 4px 0 0; padding-top: 12px; display: flex; flex-direction: column; align-items: center; }
.estimate { width: 252px; margin: 0; border: 3px solid #f8c100; border-radius: 8px; background: #000; padding: 16px 11px 0; text-align: center; height: 183px; }
.estimate legend { width: 224px; height: 24px; line-height: 22px; margin: 0 auto; padding: 0; border-radius: 4px; background: #f8c100; color: #1c1c1c; }
.levels { display: grid; grid-template-columns: repeat(3, 1fr); gap: 2px; margin: 0 5px 12px 6px; font-size: 14px; line-height: 20px; }
.levels button { height: 23px; background: linear-gradient(#54565c, #44484c); border: 1px solid #5c5f66; }
.levels .level-on { background: #ff7b36; border-color: #ff9d6a; border-radius: 0 4px 4px 0; }
.device { display: flex; gap: 5px; align-items: center; padding-left: 4px; }
.device svg { width: 72px; height: 60px; }
.device strong { line-height: 21px; color: #fff; }
.estimate p { font-size: 14px; line-height: 18px; margin-top: 9px; color: #bbb; }
.duration { align-self: stretch; display: flex; align-items: center; margin: 12px 0 0 11px; white-space: pre; }
.duration .faint { color: #555; width: 129px; margin-left: 8px; }
.gauges { align-self: stretch; display: grid; grid-template-columns: repeat(3, 1fr); margin: 27px 3px 0; }
.gauges figure { display: flex; flex-direction: column; align-items: center; white-space: nowrap; }
.gauges svg { width: 148px; height: 148px; }
.gauges text { font-size: 18px; font-weight: bold; fill: #fff; text-anchor: middle; }
.gauges .full { fill: #111; }
figcaption { text-align: center; line-height: 20px; padding-bottom: 2px; }
.dist { width: 438px; margin-top: 27px; }
.bars { height: 171px; border: 2px solid #777; background: #000; display: grid; grid-template-columns: repeat(10, 1fr); gap: 6px; padding: 3px 3px 0; }
.bar { border: 1px solid #262626; border-bottom: 0; display: flex; flex-direction: column; align-items: center; font-size: 13px; }
.bar span { flex: none; align-self: stretch; height: 24px; line-height: 24px; text-align: center; background: linear-gradient(#4c4c4c, #333); }
.bar div { flex: 1; align-self: stretch; display: flex; align-items: flex-end; padding: 2px 3px; }
.bar i { flex: 1; background: #2bd114; }

.strip { flex: none; width: 52px; background: #cdcdcd; border-left: 2px solid #aaa; padding-top: 3px; display: flex; flex-direction: column; align-items: center; }
.strip-on { align-self: stretch; background: #0082c4; display: flex; justify-content: center; padding: 3px 0 4px; margin-bottom: 11px; }
.strip button { width: 38px; height: 38px; border: 1px solid #bbb; border-radius: 6px; background: #e4e4e4; display: grid; place-items: center; }
.strip svg { width: 24px; height: 24px; }
.strip .gap-s, .strip .gap-l { margin-bottom: 12px; }
.strip .gap-m { margin-bottom: 4px; }
```
FILE: app.js
```js
const available = ["Airbox Pres Estimate Offset", "Airbox Pres Ign Timing Comp", "Airbox Pres Sensor", "Alt Fuel Comp",
  "Alt Fuel Contribution Efficiency", "Alt Fuel Conversion Factor", "Alt Fuel Density", "Alt Fuel Ign Timing",
  "Alt Fuel Ign Timing Blend", "Alt Fuel Mix Aim", "Alt Fuel Mix Aim Blend", "Alt Fuel Pres", "Alt Fuel Pres Estimate",
  "Alt Fuel Pres Sensor", "Alt Fuel Pres Warn", "Alt Fuel Pres Warn Count", "Alt Fuel Pres Warn Min", "Alt Fuel Temp",
  "Alt Fuel Temp Estimate", "Alt Fuel Temp Sensor", "Alt Fuel Timing Prim", "Alt Fuel Timing Prim Blend",
  "Alt Fuel Timing Sec", "Alt Fuel Timing Sec Blend", "Ambient Pres Estimate", "Ambient Pres Estimate Diag",
  "Ambient Pres Sensor", "Ambient Pres State", "Aux Time", "Aux Time Fuel Mix Aim", "Aux Time Fuel Vol Trim",
  "Aux Time Ign Timing Trim", "Boost Act Inverting Out DC", "Boost Act Inverting Volt", "Boost Act Inverting Volt Abs",
  "Boost Act Normal Out DC", "Boost Act Normal Volt", "Boost Act Normal Volt Abs", "Boost Aim", "Boost Aim Main",
  "Boost Aim State", "Boost Ctrl"];

const logged = {
  "1Hz": ["Fuel Out Cut Count", "Fuel Timing Prim", "Fuel Timing Sec", "Fuel Vol Comp", "Gear", "Ign Out Cut Count",
    "Ign Timing Comp", "Ign Timing State", "Inlet Air Temp", "Inlet Air Temp Sensor Diag", "Inlet Cam B1 Posn Diag",
    "Inlet Cam B2 Posn Diag", "Inlet Man Pres Sensor Diag", "Lap Beacon Number Main", "Throttle Lim",
    "Throttle Lim State", "Throttle Pedal Sensor", "Throttle Pedal Sensor Diag", "Throttle Pedal Sensor Main Diag",
    "Throttle Pedal Sensor Tracking Diag", "Throttle Posn Sensor Diag", "Throttle Servo B1 Diag",
    "Throttle Servo B1 Posn Sensor Diag", "Throttle Servo B1 Posn Sensor Main Diag",
    "Throttle Servo B1 Posn Sensor Tracking Diag", "Throttle Servo B2 Diag", "Throttle Servo B2 Posn Sensor Diag",
    "Throttle Servo B2 Posn Sensor Main Diag", "Throttle Servo B2 Posn Sensor Tracking Diag", "Warn Source"],
  "5Hz": ["Airbox Pres", "Lap Beacon Number", "Lap Beacon Ticks"],
  "10Hz": ["Brake State", "CAN Bus 1 Diag", "Clutch State", "ECU Battery Volt", "Eng Load", "Eng Speed",
    "Eng Speed Pin Diag", "Eng Speed Ref Diag", "Eng Speed Ref State"]
};

const icon = (cls, id) => `<svg class="${cls}"><use href="#${id}"/></svg>`;

document.getElementById("available").innerHTML = available.map((name, i) =>
  `<tr${i === 0 ? ' class="focused"' : ""}><td class="name">${icon("i-wave", "wave")}${name}</td><td></td></tr>`
).join("") + "<tr><td></td><td></td></tr>";

document.getElementById("logged").innerHTML = Object.entries(logged).flatMap(([rate, names]) => names.map(name =>
  `<tr${name === "Eng Speed" ? ' class="picked"' : ""}><td class="name">${
    name === "Airbox Pres" ? icon("i-wave", "wave") : icon("i-log", "logwave")
  }${name}</td><td class="hz">${rate}</td><td></td><td></td></tr>`)).join("");

const shares = { 1: 100, 2: 0, 5: 5, 10: 41, 20: 0, 50: 0, 100: 0, 200: 0, 500: 0, 1000: 0 };
document.getElementById("bars").innerHTML = Object.entries(shares).map(([rate, share]) =>
  `<div class="bar"><span>${rate}</span><div><i style="height:${share}%"></i></div></div>`).join("");
```
